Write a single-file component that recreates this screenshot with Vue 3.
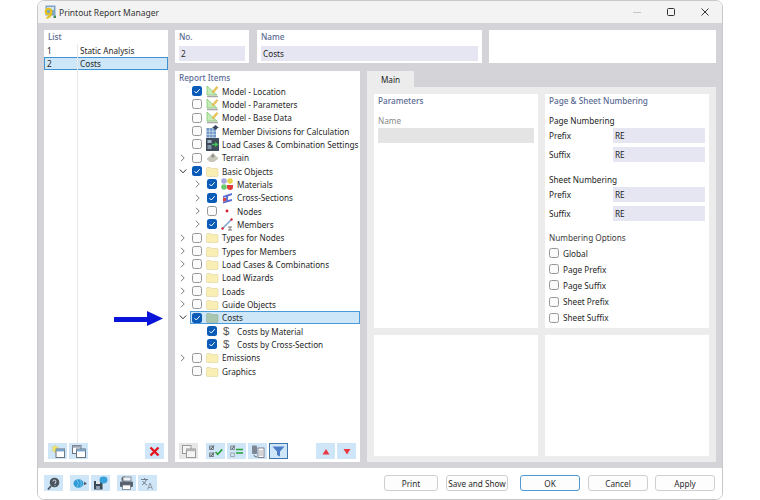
<script setup>
const tree = [
  { t: 'Model - Location', c: 1, i: 'model', l: 0 },
  { t: 'Model - Parameters', i: 'model', l: 0 },
  { t: 'Model - Base Data', i: 'model', l: 0 },
  { t: 'Member Divisions for Calculation', i: 'div', l: 0 },
  { t: 'Load Cases & Combination Settings', i: 'lc', l: 0 },
  { t: 'Terrain', i: 'terrain', l: 0, a: 'r' },
  { t: 'Basic Objects', c: 1, i: 'folder', l: 0, a: 'd' },
  { t: 'Materials', c: 1, i: 'mat', l: 1, a: 'r' },
  { t: 'Cross-Sections', c: 1, i: 'cs', l: 1, a: 'r' },
  { t: 'Nodes', i: 'node', l: 1, a: 'r' },
  { t: 'Members', c: 1, i: 'member', l: 1, a: 'r' },
  { t: 'Types for Nodes', i: 'folder', l: 0, a: 'r' },
  { t: 'Types for Members', i: 'folder', l: 0, a: 'r' },
  { t: 'Load Cases & Combinations', i: 'folder', l: 0, a: 'r' },
  { t: 'Load Wizards', i: 'folder', l: 0, a: 'r' },
  { t: 'Loads', i: 'folder', l: 0, a: 'r' },
  { t: 'Guide Objects', i: 'folder', l: 0, a: 'r' },
  { t: 'Costs', c: 1, i: 'folder', l: 0, a: 'd', sel: 1 },
  { t: 'Costs by Material', c: 1, i: 'dollar', l: 1 },
  { t: 'Costs by Cross-Section', c: 1, i: 'dollar', l: 1 },
  { t: 'Emissions', i: 'folder', l: 0, a: 'r' },
  { t: 'Graphics', i: 'folder', l: 0 }
]
const options = ['Global', 'Page Prefix', 'Page Suffix', 'Sheet Prefix', 'Sheet Suffix']
</script>

<template>
  <div class="page">
    <div class="window">
      <header class="titlebar">
        <svg class="appicon" width="14" height="14" viewBox="0 0 14 14">
          <rect x="2.500" y=".5" width="10" height="10" fill="#7fa6c4" />
          <rect x="4" y="2" width="7" height="3" fill="#d5e2ec" />
          <circle cx="5.500" cy="6.500" r="2.800" fill="none" stroke="#e4c21e" stroke-width="2" />
          <path d="M8.300 6.500Q8.300 12 3.500 13" fill="none" stroke="#e4c21e" stroke-width="2" />
          <rect x="10.500" y="10.500" width="2.500" height="2.500" fill="#3a8a5a" />
        </svg>
        <span class="title">Printout Report Manager</span>
        <div class="winctl">
          <svg width="10" height="10" viewBox="0 0 10 10"><path d="M1 5.500h8" stroke="#c4c4c4" stroke-width="1" /></svg>
          <svg width="10" height="10" viewBox="0 0 10 10"><rect x="1.500" y="1.500" width="7" height="7" rx="1" fill="none" stroke="#333" stroke-width="1" /></svg>
          <svg width="10" height="10" viewBox="0 0 10 10"><path d="M1.500 1.500l7 7M8.500 1.500l-7 7" stroke="#333" stroke-width="1" /></svg>
        </div>
      </header>

      <main class="body">
        <section class="panel list">
          <div class="label listlabel">List</div>
          <div class="listrows">
            <div class="lrow"><span class="n">1</span><span>Static Analysis</span></div>
            <div class="lrow active"><span class="n">2</span><span>Costs</span></div>
            <div class="listline"></div>
          </div>
          <div class="tools">
            <button class="tb">
              <svg width="14" height="13" viewBox="0 0 14 13"><path d="M4 0l1 2.300 2.400-.6-1.200 2.200 1.600 1.600-2.400.3L4 8 3 5.800.6 5.500l1.700-1.600L1 1.700l2.200.6z" fill="#f6ec6a" stroke="#d8c640" stroke-width=".4" /><rect x="5" y="4" width="8.500" height="8.500" fill="#fff" stroke="#6b737d" /><rect x="5" y="4" width="8.500" height="2.400" fill="#7ba3c8" /></svg>
            </button>
            <button class="tb">
              <svg width="14" height="13" viewBox="0 0 14 13"><rect x=".5" y=".5" width="8.500" height="8" fill="#fff" stroke="#6b737d" /><rect x=".5" y=".5" width="8.500" height="2.200" fill="#98a4b2" /><rect x="4.500" y="4" width="9" height="8.500" fill="#fff" stroke="#6b737d" /><rect x="4.500" y="4" width="9" height="2.400" fill="#7ba3c8" /></svg>
            </button>
            <span class="grow"></span>
            <button class="tb">
              <svg width="11" height="11" viewBox="0 0 11 11"><path d="M1.500 1.500l8 8M9.500 1.500l-8 8" stroke="#e6141e" stroke-width="2.400" /></svg>
            </button>
          </div>
        </section>

        <div class="center">
          <div class="toprow">
            <section class="panel no">
              <div class="label">No.</div>
              <div class="field">2</div>
            </section>
            <section class="panel name">
              <div class="label">Name</div>
              <div class="field">Costs</div>
            </section>
            <section class="panel blank"></section>
          </div>

          <div class="lower">
            <section class="panel items">
              <div class="label itemslabel">Report Items</div>
              <div class="tree">
                <div v-for="row in tree" :key="row.t" class="row" :class="{ lv1: row.l === 1 }">
                  <span class="arrow">
                    <svg v-if="row.a === 'r'" width="7" height="8" viewBox="0 0 7 8"><path d="M2 .8l3.200 3.200L2 7.200" fill="none" stroke="#7a7a7a" stroke-width="1" /></svg>
                    <svg v-else-if="row.a === 'd'" width="8" height="7" viewBox="0 0 8 7"><path d="M.8 1.500L4 4.800l3.200-3.300" fill="none" stroke="#333" stroke-width="1" /></svg>
                  </span>
                  <span class="rowbody" :class="{ sel: row.sel }">
                    <span class="cb" :class="{ on: row.c }">
                      <svg v-if="row.c" width="10" height="10" viewBox="0 0 10 10"><path d="M2.500 5.200l1.800 1.800 3.400-3.800" fill="none" stroke="#fff" stroke-width="1" /></svg>
                    </span>
                    <span class="ic">
                      <svg v-if="row.i === 'folder'" width="13" height="11" viewBox="0 0 13 11"><path d="M.5 2.500q0-1 1-1h3l1 1h5.500q1 0 1 1v6q0 1-1 1h-9.500q-1 0-1-1z" :fill="row.sel ? '#a9c6ae' : '#f9efb4'" :stroke="row.sel ? '#9ab3a6' : '#e2d8a6'" stroke-width=".7" /></svg>
                      <svg v-else-if="row.i === 'model'" width="13" height="13" viewBox="0 0 13 13"><path d="M1 10V1l10 9z" fill="#c4ecb4" stroke="#7cc06c" stroke-width=".7" /><path d="M1 11.500h11" stroke="#a8a8a8" stroke-width="1.400" /><path d="M6 7l4.500-5.500 1.500 1L7.500 8z" fill="#f2c84e" stroke="#c49a2c" stroke-width=".4" /></svg>
                      <svg v-else-if="row.i === 'div'" width="13" height="13" viewBox="0 0 13 13"><rect x=".5" y="3" width="9.500" height="9.500" fill="#6d94c4" /><path d="M3.700 3v9.500M6.900 3v9.500M.5 6.200h9.500M.5 9.400h9.500" stroke="#d9e5f2" stroke-width=".7" /><path d="M6 3h7L9.500 0z" fill="#39475e" /><circle cx="9.500" cy="3" r="1.800" fill="#39475e" /></svg>
                      <svg v-else-if="row.i === 'lc'" width="13" height="13" viewBox="0 0 13 13"><rect width="13" height="13" fill="#3e4a58" /><rect x="1.500" y="2" width="4" height="3" fill="#9fb4c6" /><rect x="1.500" y="7" width="4" height="4" fill="#7c93a8" /><path d="M6 6.500h5M9 4.500l2.500 2-2.500 2" stroke="#46c05a" stroke-width="1.300" fill="none" /></svg>
                      <svg v-else-if="row.i === 'terrain'" width="13" height="11" viewBox="0 0 13 11"><path d="M.5 7L5 3l2-2.500L9 3l3.500 3.500L8 10H4z" fill="#c7c6ba" /><path d="M5 4l2-2 1.500 2-1.500 2z" fill="#8d8c83" /></svg>
                      <svg v-else-if="row.i === 'mat'" width="12" height="12" viewBox="0 0 12 12"><circle cx="3" cy="3" r="2.800" fill="#a6a6e0" /><circle cx="9" cy="3" r="2.800" fill="#e8d44a" /><circle cx="3" cy="9" r="2.800" fill="#6cc86c" /><path d="M6 7h6v2a3 3 0 0 1-6 0z" fill="#e03a3a" /></svg>
                      <svg v-else-if="row.i === 'cs'" width="12" height="12" viewBox="0 0 12 12"><path d="M2 4l9-3v2L7 4.500V8l4-1v2l-9 2.500v-2l3-.8V5L2 6z" fill="#5d6fd0" /><path d="M2 6v3.500l3-.8V6z" fill="#e04040" /></svg>
                      <svg v-else-if="row.i === 'node'" width="12" height="12" viewBox="0 0 12 12"><circle cx="6" cy="6" r="1.400" fill="#d8202c" /></svg>
                      <svg v-else-if="row.i === 'member'" width="12" height="13" viewBox="0 0 12 13"><path d="M1.500 10.500L10 2" stroke="#7ea6d8" stroke-width="1.600" /><circle cx="1.500" cy="10.500" r="1.200" fill="#d8202c" /><circle cx="10.500" cy="1.500" r="1.200" fill="#d8202c" /><path d="M7 9h4M9 9v3M7 12h4" stroke="#555" stroke-width=".8" fill="none" /></svg>
                      <span v-else-if="row.i === 'dollar'" class="dollar">$</span>
                    </span>
                    <span class="txt">{{ row.t }}</span>
                  </span>
                </div>
              </div>
              <div class="tools itemtools">
                <button class="tb off">
                  <svg width="14" height="13" viewBox="0 0 14 13"><rect x=".5" y=".5" width="8.500" height="8" fill="#f4f4f4" stroke="#9a9a9a" /><rect x="4.500" y="4" width="9" height="8.500" fill="#f4f4f4" stroke="#9a9a9a" /><rect x="4.500" y="4" width="9" height="2.200" fill="#b4b4b4" /></svg>
                </button>
                <button class="tb gap">
                  <svg width="14" height="13" viewBox="0 0 14 13"><rect x=".7" y="1" width="3.600" height="3.600" fill="none" stroke="#666" stroke-width=".8" /><rect x=".7" y="8" width="3.600" height="3.600" fill="none" stroke="#666" stroke-width=".8" /><path d="M1.300 2.700l1 1 2.400-3M1.300 9.700l1 1 2.400-3" fill="none" stroke="#333" stroke-width=".9" /><path d="M6.500 7l2.200 2.400 4.500-5" fill="none" stroke="#2aa03a" stroke-width="1.600" /></svg>
                </button>
                <button class="tb">
                  <svg width="14" height="13" viewBox="0 0 14 13"><rect x=".7" y="1" width="3.600" height="3.600" fill="none" stroke="#777" stroke-width=".8" /><rect x=".7" y="8" width="3.600" height="3.600" fill="none" stroke="#999" stroke-width=".8" /><path d="M1.300 2.700l1 1 2.400-3" fill="none" stroke="#444" stroke-width=".9" /><path d="M6 4.500h7M13 8H6" stroke="#2aa03a" stroke-width="1.400" /></svg>
                </button>
                <button class="tb">
                  <svg width="14" height="13" viewBox="0 0 14 13"><rect x="1" y=".5" width="5" height="8.500" rx="1" fill="#7d8793" /><rect x="7" y="3" width="6" height="9.500" fill="#fff" stroke="#667" stroke-width=".8" /><path d="M9 5v6M11 5v6" stroke="#888" stroke-width=".7" /><path d="M3 10q0 2 3 2" fill="none" stroke="#555" stroke-width=".8" /></svg>
                </button>
                <button class="tb pressed">
                  <svg width="13" height="11" viewBox="0 0 13 11"><path d="M.5.500h12L8 5.500V10.500L5 9V5.500z" fill="#4a7cc8" /></svg>
                </button>
                <span class="grow"></span>
                <button class="tb">
                  <svg width="8" height="7" viewBox="0 0 8 7"><path d="M4 1l3.500 5.500H.5z" fill="#e83844" /></svg>
                </button>
                <button class="tb">
                  <svg width="8" height="7" viewBox="0 0 8 7"><path d="M4 6.500L.5 1h7z" fill="#e83844" /></svg>
                </button>
              </div>
            </section>

            <div class="tabarea">
              <div class="tab">Main</div>
              <div class="tabbody">
                <section class="sub">
                  <div class="label">Parameters</div>
                  <div class="greylabel">Name</div>
                  <div class="greyfield"></div>
                </section>
                <section class="sub">
                  <div class="label">Page &amp; Sheet Numbering</div>
                  <div class="group first">Page Numbering</div>
                  <div class="frow"><span>Prefix</span><div class="fval">RE</div></div>
                  <div class="frow"><span>Suffix</span><div class="fval">RE</div></div>
                  <div class="group second">Sheet Numbering</div>
                  <div class="frow"><span>Prefix</span><div class="fval">RE</div></div>
                  <div class="frow"><span>Suffix</span><div class="fval">RE</div></div>
                  <div class="group third">Numbering Options</div>
                  <div v-for="o in options" :key="o" class="opt"><span class="cb"></span><span>{{ o }}</span></div>
                </section>
                <section class="sub"></section>
                <section class="sub"></section>
              </div>
            </div>
          </div>
        </div>
      </main>

      <footer class="footer">
        <button class="tb">
          <svg width="13" height="13" viewBox="0 0 13 13"><circle cx="7.500" cy="5.500" r="4.800" fill="#4a535e" /><path d="M4 9L1 12.500" stroke="#4a535e" stroke-width="1.800" /><path d="M6 4.500a1.500 1.500 0 1 1 2 1.400V7M8 8v.8" fill="none" stroke="#d8e4ee" stroke-width="1" /></svg>
        </button>
        <button class="tb g1">
          <svg width="14" height="11" viewBox="0 0 14 11"><ellipse cx="5.500" cy="5.500" rx="5" ry="4.200" fill="#2f9bd6" /><path d="M4 2q3 3 0 7M7.500 2q2 3.500 0 7" stroke="#a4d6ee" stroke-width=".6" fill="none" /><path d="M11 3.500l3 2-3 2z" fill="#5a6572" /></svg>
        </button>
        <button class="tb">
          <svg width="15" height="14" viewBox="0 0 15 14"><rect x="1" y="5" width="8.500" height="8.500" fill="#3c4854" /><rect x="3" y="5" width="4" height="3" fill="#dfe6ec" /><rect x="3" y="10" width="4" height="3.500" fill="#8fa0b0" /><ellipse cx="10.500" cy="4" rx="4" ry="3.400" fill="#3aa2da" /></svg>
        </button>
        <button class="tb g1">
          <svg width="15" height="14" viewBox="0 0 15 14"><circle cx="5" cy="3" r="2.600" fill="#626c76" /><rect x="4" y="1" width="8" height="4" fill="#eef1f4" stroke="#626c76" stroke-width=".7" /><rect x="1" y="5.500" width="13" height="5.500" rx="1" fill="#596370" /><rect x="3.500" y="9" width="8" height="4.500" fill="#fff" stroke="#626c76" stroke-width=".7" /></svg>
        </button>
        <button class="tb">
          <svg width="15" height="13" viewBox="0 0 15 13"><path d="M1 2.500h7M4.500 1v1.500M2 8q3-1.500 4.500-5.500M2.500 4q2 3 4.500 4" fill="none" stroke="#6b7480" stroke-width=".9" /><path d="M7.500 12.500l2.500-6.500 2.500 6.500M8.500 10.500h3" fill="none" stroke="#8b939d" stroke-width=".9" /></svg>
        </button>
        <span class="grow"></span>
        <button class="btn print">Print</button>
        <button class="btn save">Save and Show</button>
        <button class="btn ok">OK</button>
        <button class="btn">Cancel</button>
        <button class="btn apply">Apply</button>
      </footer>
    </div>

    <svg class="callout" width="50" height="16" viewBox="0 0 50 16">
      <path d="M0 6h33V0l16 7.500L33 15v-4H0z" fill="#0a14d8" />
    </svg>
  </div>
</template>

<style scoped>
.page {
  position: relative;
  width: 760px;
  height: 500px;
  background: #fff;
  overflow: hidden;
  font-family: "Noto Sans", "Open Sans", sans-serif;
  font-size: 8.2px;
  color: #262626;
}
.window {
  box-sizing: border-box;
  width: 686px;
  height: 500px;
  margin-left: 37px;
  display: flex;
  flex-direction: column;
  border: 1px solid #c9c9c9;
  border-radius: 7px;
  overflow: hidden;
  background: #fff;
}
.titlebar {
  height: 22px;
  flex: none;
  display: flex;
  align-items: center;
  background: #f3f3f3;
  padding-left: 5px;
}
.appicon { margin-right: 2px; }
.title { font-size: 8.500px; color: #333; }
.winctl {
  margin-left: auto;
  display: flex;
  gap: 24px;
  margin-right: 12px;
  align-items: center;
}
.body {
  flex: 1;
  min-height: 0;
  display: flex;
  gap: 7px;
  background: #d4d4d8;
  padding: 7px 6px 6px;
}
.panel { background: #fff; box-sizing: border-box; position: relative; }
.label { color: #5a6a92; font-weight: 500; font-size: 8.2px; line-height: 12px; }
.list {
  width: 124px;
  display: flex;
  flex-direction: column;
}
.listlabel { padding: 1px 4px 0; height: 13px; }
.listrows { flex: 1; position: relative; }
.lrow {
  height: 13px;
  line-height: 13px;
  display: flex;
  padding-left: 3px;
  box-sizing: border-box;
}
.lrow .n { width: 33px; }
.lrow.active {
  background: #cde6f8;
  border: 1px solid #3e92d4;
  padding-left: 2px;
  line-height: 11px;
}
.listline {
  position: absolute;
  left: 33px;
  top: 0;
  bottom: 0;
  width: 1px;
  background: #e8e8e8;
}
.tools {
  display: flex;
  gap: 2px;
  align-items: center;
  height: 16px;
  padding: 0 4px 3px;
  flex: none;
}
.grow { flex: 1; }
.tb {
  width: 19px;
  height: 16px;
  padding: 0;
  border: 0;
  background: #cfe6f8;
  display: flex;
  align-items: center;
  justify-content: center;
  flex: none;
}
.tb.off { background: #e6e6e6; }
.tb.gap { margin-left: 6px; }
.tb.pressed { background: #cfe6f8; border: 1px solid #3d74ac; box-sizing: border-box; }
.center {
  flex: 1;
  min-width: 0;
  display: flex;
  flex-direction: column;
  gap: 8px;
}
.toprow { display: flex; gap: 8px; height: 33px; flex: none; }
.toprow .panel { padding: 1px 4px 0; }
.no { width: 74px; }
.name { width: 225px; margin-right: -1px; }
.blank { flex: 1; }
.field {
  margin-top: 3px;
  height: 15px;
  line-height: 15px;
  background: #e6e6f2;
  padding-left: 2px;
}
.lower { flex: 1; min-height: 0; display: flex; gap: 7px; }
.items {
  width: 185px;
  display: flex;
  flex-direction: column;
}
.itemslabel { padding: 1px 4px 0; height: 13px; }
.tree { flex: 1; margin-top: -0.5px; }
.row {
  height: 13.33px;
  display: flex;
  align-items: center;
  box-sizing: border-box;
  padding-left: 3px;
  white-space: nowrap;
}
.row.lv1 { padding-left: 18px; }
.rowbody {
  display: flex;
  align-items: center;
  flex: 1;
  height: 100%;
  margin-left: -2px;
  padding-left: 2px;
  box-sizing: border-box;
}
.rowbody.sel {
  background: #cde6f8;
  outline: 1px solid #4a9ad8;
  outline-offset: -1px;
}
.arrow {
  width: 14px;
  flex: none;
  display: flex;
  align-items: center;
  padding-left: 1px;
  box-sizing: border-box;
}
.cb {
  box-sizing: border-box;
  width: 10px;
  height: 10px;
  border: 1px solid #969696;
  border-radius: 2.500px;
  background: #fbfbfb;
  flex: none;
  display: block;
}
.cb svg { display: block; margin: 0; }
.cb.on { background: #0a5cb8; border: 0; }
.ic {
  width: 16px;
  margin-left: 4px;
  flex: none;
  display: flex;
  align-items: center;
}
.dollar {
  font-family: "Liberation Sans", sans-serif;
  font-size: 11.500px;
  line-height: 12px;
  color: #555;
  margin-left: 2px;
}
.itemtools { padding: 0 4px 3px; gap: 2px; }
.tabarea { flex: 1; min-width: 0; display: flex; flex-direction: column; }
.tab {
  width: 47px;
  height: 16px;
  flex: none;
  background: #ececec;
  text-align: center;
  line-height: 17px;
  color: #222;
}
.tabbody {
  flex: 1;
  min-height: 0;
  background: #ececec;
  display: grid;
  grid-template-columns: 164px 164px;
  grid-template-rows: 234px 121px;
  gap: 7px;
  padding: 7px;
}
.sub { background: #fff; padding: 1px 4px; box-sizing: border-box; }
.greylabel { color: #8a8a8a; margin-top: 8px; line-height: 12px; }
.greyfield { height: 15px; background: #e4e4e4; margin-top: 1px; }
.group { color: #222; line-height: 12px; }
.group.first { margin-top: 8px; }
.group.second { margin-top: 12px; }
.group.third { margin-top: 11px; margin-bottom: 1px; color: #3a3a3a; }
.frow {
  display: flex;
  align-items: center;
  height: 15px;
  margin-top: 1px;
  color: #222;
}
.frow + .frow { margin-top: 4px; }
.frow span { width: 64px; flex: none; }
.fval {
  flex: 1;
  height: 15px;
  line-height: 15px;
  background: #e6e6f2;
  padding-left: 2px;
}
.opt {
  display: flex;
  align-items: center;
  gap: 4px;
  height: 16.200px;
}
.footer {
  flex: none;
  height: 31px;
  display: flex;
  align-items: center;
  gap: 2px;
  padding: 0 7px 1px 6px;
  box-sizing: border-box;
  background: #fff;
}
.footer .g1 { margin-left: 5px; }
.btn {
  width: 60px;
  height: 16px;
  padding: 0;
  box-sizing: border-box;
  border: 1px solid #cfcfcf;
  border-radius: 3px;
  background: #fdfdfd;
  font: inherit;
  color: #2c2c2c;
  margin-left: 6px;
  line-height: 13px;
  white-space: nowrap;
}
.btn.print { width: 54px; }
.btn.save { width: 62px; }
.btn.ok { margin-left: 10px; border-color: #4f9ad4; }
.btn.apply { margin-left: 5px; }
.callout { position: absolute; left: 114px; top: 311px; }
</style>
